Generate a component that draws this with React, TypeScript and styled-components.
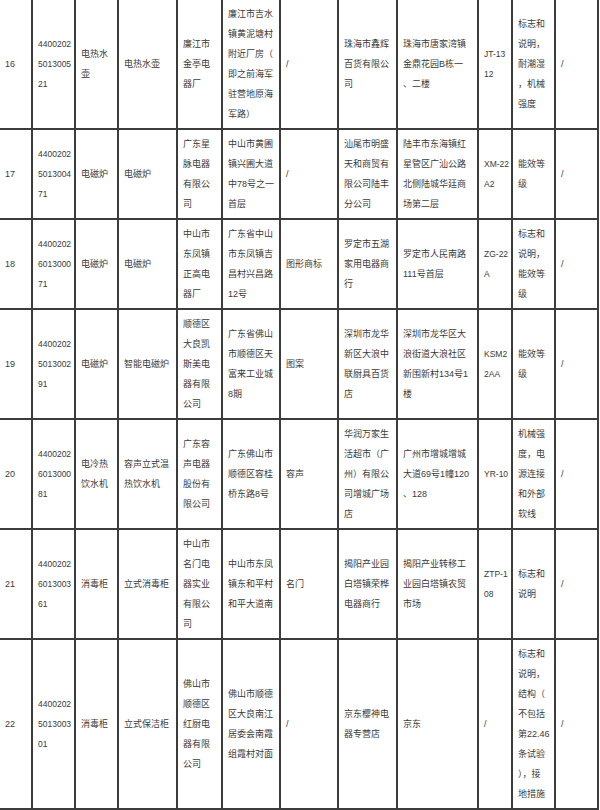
import React from "react";
import styled, { createGlobalStyle } from "styled-components";

const GlobalStyle = createGlobalStyle`
  html, body {
    margin: 0;
    padding: 0;
    background: #ffffff;
    overflow: hidden;
  }
`;

const Viewport = styled.div`
  width: 600px;
  height: 810px;
  overflow: hidden;
  background: #ffffff;
`;

const Table = styled.div`
  display: grid;
  grid-template-columns: 31px 41px 41px 57px 43px 56px 56px 57px 79px 32px 41px 41px;
  gap: 2px;
  padding: 2px;
  margin: -2px 0 0 -2px;
  width: max-content;
  background: #3c3c3c;
  font-family: "Liberation Sans", "Noto Sans CJK SC", sans-serif;
  font-size: 9px;
  line-height: 20px;
  color: #3a3a3a;
`;

const Cell = styled.div<{ $latin?: boolean }>`
  background: #ffffff;
  display: flex;
  align-items: center;
  padding: 4px 0 4px 5px;
  white-space: nowrap;
  font-size: ${(p) => (p.$latin ? "8.5px" : "9px")};
  overflow: hidden;
`;

const Lines = styled.span`
  display: block;
`;

type Row = string[][];

const rows: Row[] = [
  [
    ["16"],
    ["4400202", "5013005", "21"],
    ["电热水", "壶"],
    ["电热水壶"],
    ["廉江市", "金亭电", "器厂"],
    ["廉江市吉水", "镇黄泥塘村", "附近厂房（", "即之前海军", "驻营地原海", "军路）"],
    ["/"],
    ["珠海市鑫辉", "百货有限公", "司"],
    ["珠海市唐家湾镇", "金鼎花园B栋一", "、二楼"],
    ["JT-13", "12"],
    ["标志和", "说明，", "耐潮湿", "，机械", "强度"],
    ["/"],
  ],
  [
    ["17"],
    ["4400202", "5013004", "71"],
    ["电磁炉"],
    ["电磁炉"],
    ["广东星", "脉电器", "有限公", "司"],
    ["中山市黄圃", "镇兴圃大道", "中78号之一", "首层"],
    ["/"],
    ["汕尾市明盛", "天和商贸有", "限公司陆丰", "分公司"],
    ["陆丰市东海镇红", "星管区广汕公路", "北侧陆城华廷商", "场第二层"],
    ["XM-22", "A2"],
    ["能效等", "级"],
    ["/"],
  ],
  [
    ["18"],
    ["4400202", "6013000", "71"],
    ["电磁炉"],
    ["电磁炉"],
    ["中山市", "东凤镇", "正高电", "器厂"],
    ["广东省中山", "市东凤镇吉", "昌村兴昌路", "12号"],
    ["图形商标"],
    ["罗定市五湖", "家用电器商", "行"],
    ["罗定市人民南路", "111号首层"],
    ["ZG-22", "A"],
    ["标志和", "说明，", "能效等", "级"],
    ["/"],
  ],
  [
    ["19"],
    ["4400202", "5013002", "91"],
    ["电磁炉"],
    ["智能电磁炉"],
    ["顺德区", "大良凯", "斯美电", "器有限", "公司"],
    ["广东省佛山", "市顺德区天", "富来工业城", "8期"],
    ["图案"],
    ["深圳市龙华", "新区大浪中", "联厨具百货", "店"],
    ["深圳市龙华区大", "浪街道大浪社区", "新围新村134号1", "楼"],
    ["KSM2", "2AA"],
    ["能效等", "级"],
    ["/"],
  ],
  [
    ["20"],
    ["4400202", "6013000", "81"],
    ["电冷热", "饮水机"],
    ["容声立式温", "热饮水机"],
    ["广东容", "声电器", "股份有", "限公司"],
    ["广东佛山市", "顺德区容桂", "桥东路8号"],
    ["容声"],
    ["华润万家生", "活超市（广", "州）有限公", "司增城广场", "店"],
    ["广州市增城增城", "大道69号1幢120", "、128"],
    ["YR-10"],
    ["机械强", "度，电", "源连接", "和外部", "软线"],
    ["/"],
  ],
  [
    ["21"],
    ["4400202", "6013003", "61"],
    ["消毒柜"],
    ["立式消毒柜"],
    ["中山市", "名门电", "器实业", "有限公", "司"],
    ["中山市东凤", "镇东和平村", "和平大道南"],
    ["名门"],
    ["揭阳产业园", "白塔镇荣桦", "电器商行"],
    ["揭阳产业转移工", "业园白塔镇农贸", "市场"],
    ["ZTP-1", "08"],
    ["标志和", "说明"],
    ["/"],
  ],
  [
    ["22"],
    ["4400202", "5013003", "01"],
    ["消毒柜"],
    ["立式保洁柜"],
    ["佛山市", "顺德区", "红厨电", "器有限", "公司"],
    ["佛山市顺德", "区大良南江", "居委会南霞", "组霞村对面"],
    ["/"],
    ["京东樱神电", "器专营店"],
    ["京东"],
    ["/"],
    ["标志和", "说明，", "结构（", "不包括", "第22.46", "条试验", "），接", "地措施"],
    ["/"],
  ],
];

const latinColumns = new Set([1, 9]);

export default function App() {
  return (
    <Viewport>
      <GlobalStyle />
      <Table>
        {rows.map((row, ri) =>
          row.map((lines, ci) => (
            <Cell key={`${ri}-${ci}`} $latin={latinColumns.has(ci)}>
              <Lines>
                {lines.map((l, li) => (
                  <React.Fragment key={li}>
                    {li > 0 && <br />}
                    {l}
                  </React.Fragment>
                ))}
              </Lines>
            </Cell>
          ))
        )}
      </Table>
    </Viewport>
  );
}
